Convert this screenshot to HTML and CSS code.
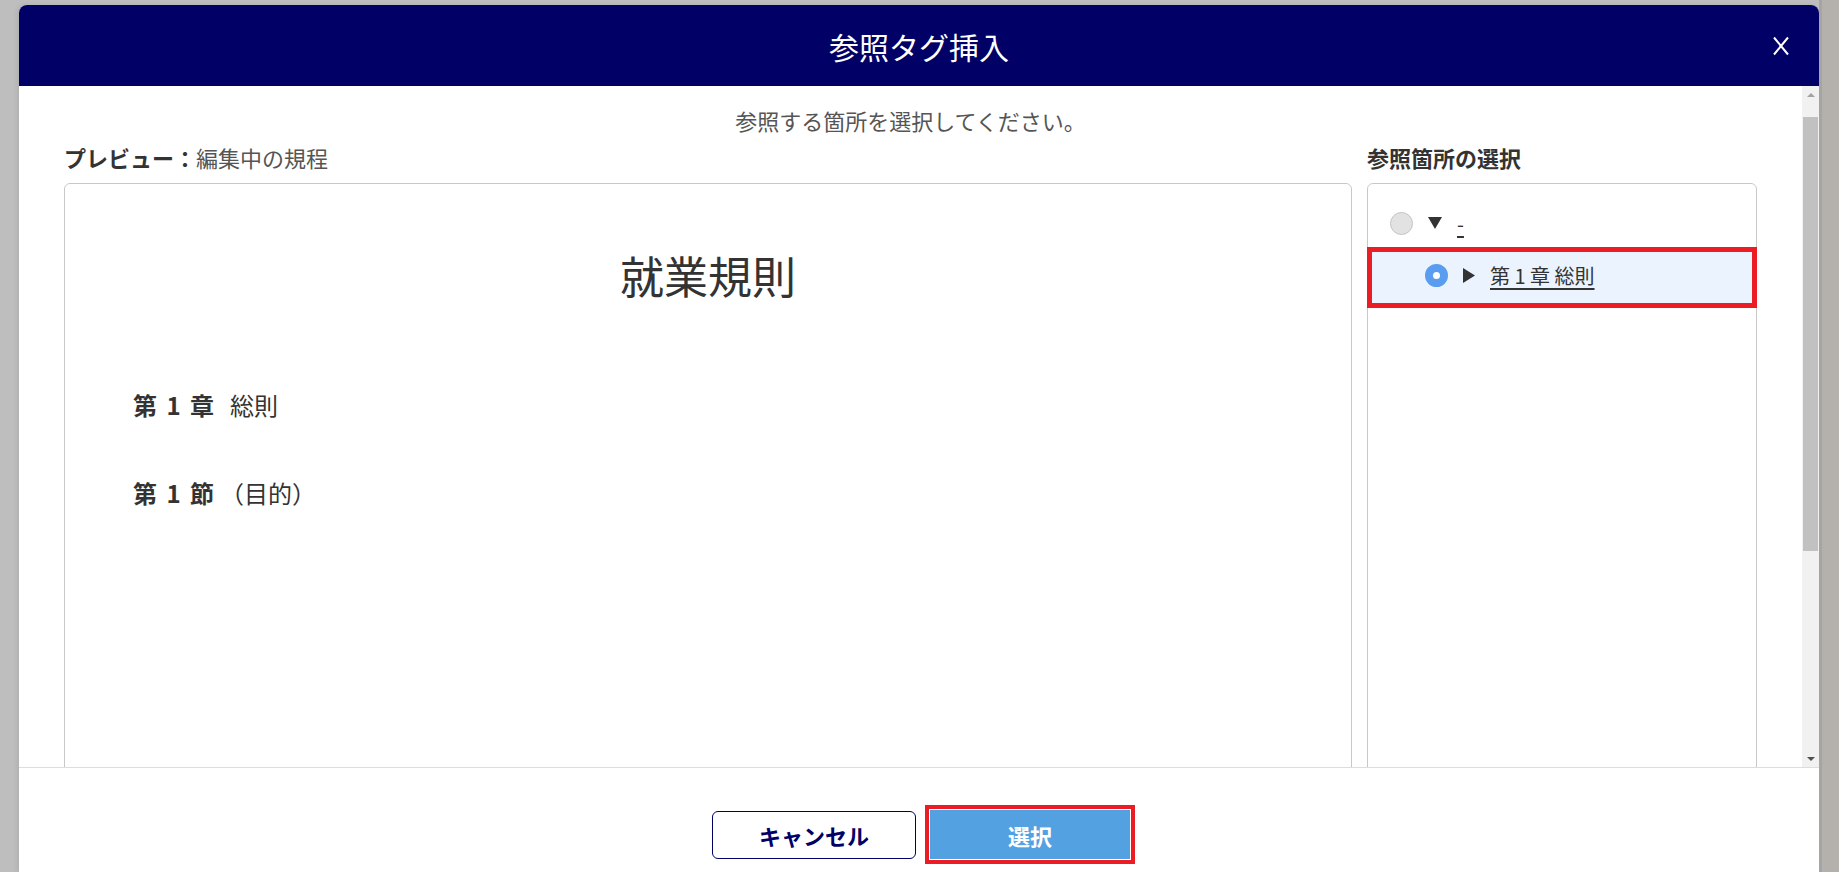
FILE: index.html
```html
<!DOCTYPE html>
<html lang="ja">
<head>
    <meta charset="UTF-8">
    <title>参照タグ挿入</title>
    <link rel="stylesheet" href="styles.css">
</head>
<body>
    <div class="modal">
        <div class="modal-header">
            <h2 class="modal-title">参照タグ挿入</h2>
            <button class="close-button" title="閉じる">
                <svg width="20" height="20" viewBox="0 0 20 20">
                    <path d="M3 1.5 L17 18.5 M17 1.5 L3 18.5" stroke="#fff" stroke-width="2" fill="none"/>
                </svg>
            </button>
        </div>
        <div class="modal-body">
            <div class="body-content">
                <p class="guide">参照する箇所を選択してください。</p>
                <div class="panes">
                    <div class="pane-label"><b>プレビュー：</b>編集中の規程</div>
                    <div class="pane-label"><b>参照箇所の選択</b></div>
                    <div class="preview">
                        <h1 class="doc-title">就業規則</h1>
                        <div class="doc-line chapter"><b>第 1 章</b>総則</div>
                        <div class="doc-line section"><b>第 1 節</b>（目的）</div>
                    </div>
                    <div class="tree">
                        <div class="tree-row">
                            <span class="radio"></span>
                            <svg class="caret" width="14" height="12" viewBox="0 0 14 12"><path d="M0 0 H14 L7 12 Z" fill="#333"/></svg>
                            <a class="tree-link">-</a>
                        </div>
                        <div class="tree-row child selected">
                            <span class="radio checked"></span>
                            <svg class="caret" width="12" height="15" viewBox="0 0 12 15"><path d="M0 0 L12 7.5 L0 15 Z" fill="#333"/></svg>
                            <a class="tree-link">第 1 章 総則</a>
                        </div>
                    </div>
                </div>
            </div>
            <div class="scrollbar">
                <span class="scroll-arrow up"></span>
                <div class="scroll-thumb"></div>
                <div class="scroll-space"></div>
                <span class="scroll-arrow down"></span>
            </div>
        </div>
        <div class="modal-footer">
            <button class="button cancel-button">キャンセル</button>
            <button class="button select-button">選択</button>
        </div>
    </div>
    <div class="page-scroll"></div>
</body>
</html>
```

FILE: styles.css
```css
body {
    margin: 0;
    height: 872px;
    overflow: hidden;
    display: flex;
    background: #bebebe;
    font-family: "Noto Sans CJK JP", "Liberation Sans", sans-serif;
    color: #333;
}
.modal {
    margin: 5px 0 0 19px;
    width: 1800px;
    height: 867px;
    background: #fff;
    border-radius: 8px 8px 0 0;
    display: flex;
    flex-direction: column;
    overflow: hidden;
    box-shadow: -2px 0 5px rgba(0, 0, 0, 0.08);
}
.page-scroll {
    flex: 1;
    background: #b4b0ab;
    border-left: 3px solid #a5a5a5;
}

/* header */
.modal-header {
    flex: none;
    height: 81px;
    padding: 0 28px;
    background: #000066;
    color: #fff;
    display: grid;
    grid-template-columns: 1fr auto 1fr;
    align-items: center;
}
.modal-title {
    grid-column: 2;
    margin: 0;
    font-size: 30px;
    font-weight: normal;
    line-height: 40px;
}
.close-button {
    grid-column: 3;
    justify-self: end;
    width: 20px;
    height: 20px;
    padding: 0;
    border: none;
    background: none;
    cursor: pointer;
    display: flex;
}

/* body */
.modal-body {
    flex: none;
    height: 681px;
    display: flex;
    border-bottom: 1px solid #ddd;
    overflow: hidden;
}
.body-content {
    flex: 1;
    padding: 19px 45px 0;
    overflow: hidden;
}
.guide {
    margin: 0;
    text-align: center;
    font-size: 22px;
    line-height: 30px;
    color: #555;
}
.panes {
    display: grid;
    grid-template-columns: 1fr 390px;
    column-gap: 15px;
    margin-top: 7px;
}
.pane-label {
    font-size: 22px;
    line-height: 30px;
    margin-bottom: 11px;
    color: #555;
}
.pane-label b {
    color: #333;
}
.preview, .tree {
    border: 1px solid #c8c8c8;
    border-radius: 6px;
    height: 640px;
}
.doc-title {
    margin: 61px 0 0;
    text-align: center;
    font-size: 44px;
    font-weight: normal;
    line-height: 60px;
}
.doc-line {
    margin-left: 68px;
    font-size: 24px;
    line-height: 30px;
}
.doc-line b {
    margin-right: 16px;
    word-spacing: 4px;
}
.section b {
    margin-right: 6px;
}
.chapter {
    margin-top: 85px;
}
.section {
    margin-top: 58px;
}

/* tree */
.tree {
    padding-top: 14px;
}
.tree-row {
    display: flex;
    align-items: center;
    gap: 15px;
    height: 50px;
    padding-left: 22px;
    font-size: 20px;
}
.tree-row.child {
    height: 54px;
    padding-bottom: 5px;
    padding-left: 57px;
}
.tree-row.selected {
    position: relative;
    background: #ebf3fe;
}
.tree-row.selected::after {
    content: "";
    position: absolute;
    top: -1px;
    left: -1px;
    right: -1px;
    bottom: -1px;
    border: 5px solid #ec1c24;
}
.radio {
    flex: none;
    width: 23px;
    height: 23px;
    box-sizing: border-box;
    border-radius: 50%;
    border: 1px solid #c4c4c4;
    background: #e2e2e2;
}
.radio.checked {
    border: 8px solid #5a9cf0;
    background: #fff;
}
.caret {
    flex: none;
}
.tree-link {
    color: #333;
    text-decoration: underline;
    text-underline-offset: 4px;
    cursor: pointer;
}

/* scrollbar */
.scrollbar {
    flex: none;
    width: 17px;
    background: #f1f1f1;
    display: flex;
    flex-direction: column;
    align-items: center;
}
.scroll-arrow {
    height: 17px;
    display: flex;
    align-items: center;
    justify-content: center;
}
.scroll-arrow.up::before {
    content: "";
    border-left: 4px solid transparent;
    border-right: 4px solid transparent;
    border-bottom: 4px solid #a3a3a3;
}
.scroll-arrow.down::before {
    content: "";
    border-left: 4px solid transparent;
    border-right: 4px solid transparent;
    border-top: 4px solid #505050;
}
.scroll-thumb {
    width: 15px;
    height: 434px;
    margin-top: 14px;
    background: #c1c1c1;
}
.scroll-space {
    flex: 1;
}

/* footer */
.modal-footer {
    flex: 1;
    display: flex;
    justify-content: center;
    align-items: flex-start;
    gap: 14px;
    padding: 42px 0 0 4px;
}
.button {
    font-family: inherit;
    font-size: 22px;
    font-weight: bold;
    cursor: pointer;
}
.cancel-button {
    width: 204px;
    height: 48px;
    margin-top: 1px;
    background: #fff;
    color: #000066;
    border: 1px solid #000066;
    border-radius: 6px;
}
.select-button {
    width: 200px;
    height: 49px;
    background: #53a1e0;
    color: #fff;
    border: none;
    border-radius: 0;
    outline: 4px solid #ec1c24;
    outline-offset: 1px;
}
```
